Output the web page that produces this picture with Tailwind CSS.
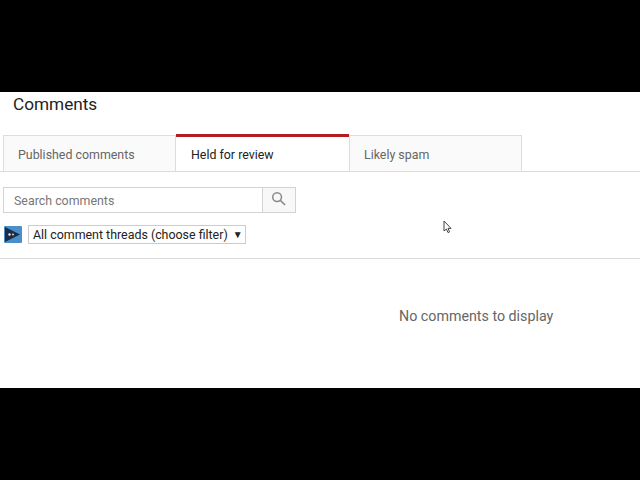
<!DOCTYPE html>
<html lang="en">

<head>
  <meta charset="UTF-8">
  <title>Comments</title>
  <script src="https://cdn.jsdelivr.net/npm/@tailwindcss/browser@4"></script>
</head>

<body class="bg-black font-['Roboto',sans-serif]">
  <div class="w-[640px] h-[480px] pt-[92px] overflow-hidden">
    <main class="relative h-[296px] bg-white">
      <h1 class="pl-[13px] text-[17.2px] leading-[24px] text-[#222]">Comments</h1>

      <!-- tabs -->
      <div class="flex mt-[19px] pl-[3px] h-[37px] border-b border-[#d9d9d9] text-[12.4px]">
        <div class="w-[173px] h-[37px] pl-[14px] pt-[10px] leading-[18px] bg-[#fafafa] border border-[#ddd] text-[#666]">Published comments</div>
        <div class="w-[173px] h-[37px] pl-[15px] pt-[9px] leading-[18px] bg-white border-t-[3px] border-[#b01e23] text-[#222] -mt-px">Held for review</div>
        <div class="w-[173px] h-[37px] pl-[14px] pt-[10px] leading-[18px] bg-[#fafafa] border border-[#ddd] text-[#666]">Likely spam</div>
      </div>

      <!-- search -->
      <div class="flex mt-[15px] ml-[3px] w-[293px] h-[26px]">
        <div class="w-[260px] pl-[10px] leading-[25px] text-[12.4px] text-[#777] border border-[#d3d3d3]">Search comments</div>
        <div class="flex-1 flex items-center justify-center bg-[#f8f8f8] border border-l-0 border-[#d3d3d3]">
          <svg class="w-[15px] h-[15px] -mt-[4px] -ml-[2px]" viewBox="0 0 16 16" fill="none" stroke="#888" stroke-width="1.6">
            <circle cx="6.5" cy="6.5" r="4.7" />
            <path d="M10 10l5 5" />
          </svg>
        </div>
      </div>

      <!-- filter -->
      <div class="flex items-center mt-[12px] ml-[4px]">
        <svg class="w-[18px] h-[17px]" viewBox="0 0 18 17">
          <rect width="18" height="17" rx="1" fill="#4a8fc9" />
          <path d="M1 1L16 8.5L1 16z" fill="#1d2b45" />
          <circle cx="5.5" cy="8.5" r="1.2" fill="#dfe6ee" />
          <circle cx="9" cy="8.5" r="0.9" fill="#dfe6ee" />
        </svg>
        <div class="flex items-center ml-[6px] w-[218px] h-[19px] pl-[4px] border border-[#ccc] text-[12.42px] leading-[17px] text-[#222] whitespace-nowrap">
          <span>All comment threads (choose filter)</span>
          <span class="ml-[5px] text-[10px]">▼</span>
        </div>
      </div>

      <div class="mt-[14px] border-t border-[#d9d9d9]"></div>

      <p class="mt-[47px] pl-[399px] text-[14.25px] leading-[20px] text-[#666]">No comments to display</p>

      <!-- mouse pointer -->
      <svg class="absolute left-[443px] top-[128px] w-[9px] h-[14px]" viewBox="0 0 9 14" fill="white" stroke="#444" stroke-width="1">
        <path d="M1 1v10l2.4-2 1.6 3.6 1.6-.7-1.6-3.5H8z" />
      </svg>
    </main>
  </div>
</body>

</html>
